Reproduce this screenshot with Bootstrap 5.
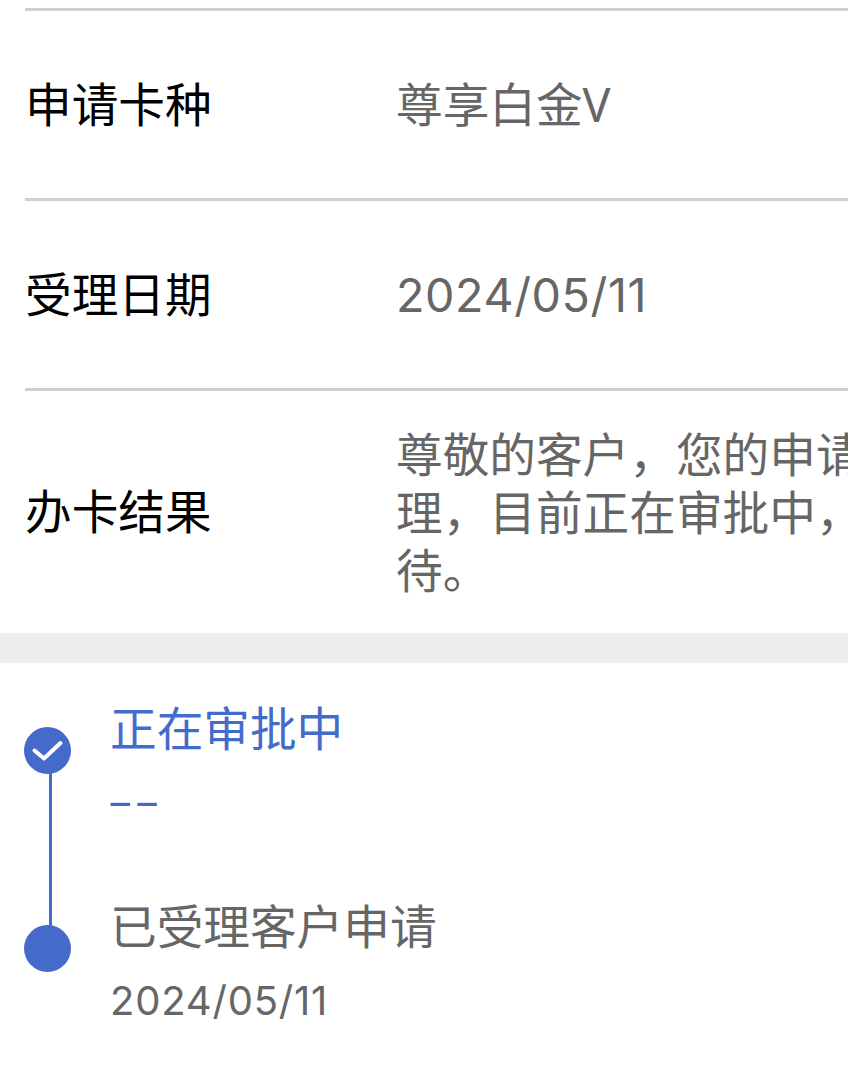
<!DOCTYPE html>
<html lang="zh">
<head>
  <meta charset="UTF-8">
  <title>办卡进度</title>
  <link rel="stylesheet" href="https://cdn.jsdelivr.net/npm/bootstrap@5.3.0/dist/css/bootstrap.min.css">
  <style>
    html, body { height: 1080px; overflow: hidden; }
    body { background: #fff; font-family: "Noto Sans", "Noto Sans CJK SC", sans-serif; }
    .info-list { padding-left: 25px; }
    .info-row { border-top: 3px solid #d0d0d0; width: 900px; white-space: nowrap; padding-bottom: 1px; }
    .info-row:first-child { margin-top: 8px; height: 190px; }
    .row-b { height: 190px; }
    .row-c { height: 245px; }
    .info-label { width: 371px; flex: none; font-size: 46.67px; line-height: 1; color: #000; }
    .info-val { font-size: 46.67px; line-height: 58px; color: #666; }
    .date-text { font-family: "Inter", sans-serif; font-weight: 400; letter-spacing: 0.6px; }
    .band { height: 30px; background: #ededed; }
    .steps { padding: 35px 0 0 24px; position: relative; }
    .step-a { height: 198px; }
    .dot { width: 47px; height: 47px; border-radius: 50%; background: #456bca; flex: none; margin-top: 29px; position: relative; z-index: 1; }
    .dot svg { display: block; }
    .step-line { position: absolute; left: 49px; top: 100px; width: 3px; height: 170px; background: #456bca; }
    .step-body { margin-left: 39px; }
    .step-title { font-size: 46.67px; line-height: 60px; color: #666; }
    .step-sub { font-size: 40px; line-height: 50px; margin-top: 19px; color: #666; }
    .step-sub .date-text { letter-spacing: 0.8px; }
    .step-a .step-title, .step-a .step-sub { color: #456bca; }
    .step-a .step-sub { margin-top: 17px; }
    .dash-text { display: inline-block; font-family: "Liberation Sans", sans-serif; font-size: 40px; transform: scaleX(2); transform-origin: left center; margin-left: -3px; }
  </style>
</head>
<body>
  <div class="info-list">
    <div class="info-row d-flex align-items-center">
      <div class="info-label">申请卡种</div>
      <div class="info-val">尊享白金V</div>
    </div>
    <div class="info-row row-b d-flex align-items-center">
      <div class="info-label">受理日期</div>
      <div class="info-val"><span class="date-text">2024/05/11</span></div>
    </div>
    <div class="info-row row-c d-flex align-items-center">
      <div class="info-label">办卡结果</div>
      <div class="info-val">尊敬的客户，您的申请已受<br>理，目前正在审批中，请耐心等<br>待。</div>
    </div>
  </div>
  <div class="band"></div>
  <div class="steps">
    <div class="step-line"></div>
    <div class="step-a d-flex">
      <div class="dot">
        <svg width="47" height="47" viewBox="0 0 47 47"><path d="M10.5 23.5L20 31.5L36.5 16" fill="none" stroke="#fff" stroke-width="4" stroke-linecap="round" stroke-linejoin="round"/></svg>
      </div>
      <div class="step-body">
        <div class="step-title">正在审批中</div>
        <div class="step-sub"><span class="dash-text">--</span></div>
      </div>
    </div>
    <div class="d-flex">
      <div class="dot"></div>
      <div class="step-body">
        <div class="step-title">已受理客户申请</div>
        <div class="step-sub"><span class="date-text">2024/05/11</span></div>
      </div>
    </div>
  </div>
  <script src="https://cdn.jsdelivr.net/npm/bootstrap@5.3.0/dist/js/bootstrap.bundle.min.js"></script>
</body>
</html>
